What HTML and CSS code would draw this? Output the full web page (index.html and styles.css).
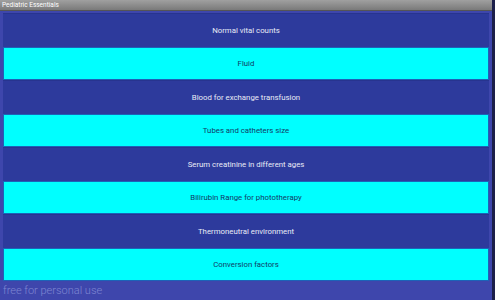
FILE: index.html
```html
<!DOCTYPE html>
<html>
<head>
<meta charset="utf-8">
<link rel="stylesheet" href="styles.css">
</head>
<body>
<div class="window">
  <div class="titlebar">Pediatric Essentials</div>
  <div class="content">
    <div class="list">
      <div class="row dark">Normal vital counts</div>
      <div class="row light">Fluid</div>
      <div class="row dark">Blood for exchange transfusion</div>
      <div class="row light">Tubes and catheters size</div>
      <div class="row dark">Serum creatinine in different ages</div>
      <div class="row light">Bilirubin Range for phototherapy</div>
      <div class="row dark">Thermoneutral environment</div>
      <div class="row light">Conversion factors</div>
    </div>
    <div class="footer">free for personal use</div>
  </div>
</div>
</body>
</html>
```
FILE: styles.css
```css
html, body {
  margin: 0;
  padding: 0;
  width: 495px;
  height: 300px;
  overflow: hidden;
  background: #1a1a2a;
  font-family: Roboto, "Liberation Sans", sans-serif;
}
.window {
  width: 492px;
  height: 300px;
  display: flex;
  flex-direction: column;
  border-right: 3px solid #1c1f4a;
}
.titlebar {
  height: 11px;
  line-height: 10px;
  background: linear-gradient(#a0a0a0, #7a7a7a);
  border-bottom: 1px solid #555;
  color: #fff;
  font-size: 6.5px;
  padding-left: 2px;
  box-sizing: border-box;
}
.content {
  flex: 1;
  background: #3e46ac;
  padding: 2px 3px 0 3px;
  display: flex;
  flex-direction: column;
}
.list {
  display: flex;
  flex-direction: column;
}
.row {
  height: 33.5px;
  box-sizing: border-box;
  display: flex;
  align-items: center;
  justify-content: center;
  font-size: 7.8px;
}
.row.dark {
  background: #2d3a9c;
  color: #e8eaf6;
  border-top: 1px solid #27348f;
}
.row.light {
  background: #00ffff;
  color: #123a66;
  border: 1px solid #1c63b8;
}
.footer {
  font-size: 11px;
  font-weight: 300;
  color: #7f86d2;
  padding-top: 3px;
  line-height: 13px;
}
```
